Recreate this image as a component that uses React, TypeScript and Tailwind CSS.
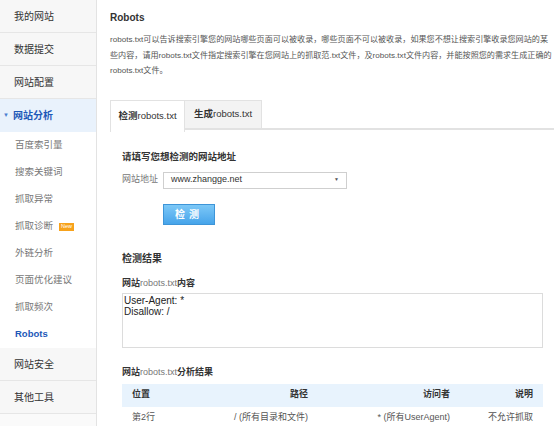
import React from "react";

const font = { fontFamily: '"Liberation Sans", "Noto Sans CJK SC", sans-serif' };

const topBefore = ["我的网站", "数据提交", "网站配置"];
const subItems = [
  "百度索引量",
  "搜索关键词",
  "抓取异常",
  "抓取诊断",
  "外链分析",
  "页面优化建议",
  "抓取频次",
];
const topAfter = ["网站安全", "其他工具"];

function Sidebar() {
  return (
    <aside className="w-[97px] shrink-0 border-r border-[#e3e3e3] bg-[#f7f7f7]">
      {topBefore.map((t) => (
        <div
          key={t}
          className="flex h-[33px] items-center border-b border-[#e6e6e6] pl-[14px] text-[10px] text-[#333]"
        >
          {t}
        </div>
      ))}
      <div className="flex h-[33px] items-center bg-[#e9f2fc] pl-[3px] text-[10px] font-bold text-[#1d58b8]">
        <span className="mr-[4px] text-[6px] text-[#4a7fd0]">▼</span>
        网站分析
      </div>
      <div className="bg-white">
        {subItems.map((t) => (
          <div
            key={t}
            className="flex h-[27px] items-center gap-[6px] pl-[15px] text-[9.5px] text-[#777]"
          >
            {t}
            {t === "抓取诊断" && (
              <span className="flex h-[8px] items-center bg-[#f7a21b] px-[2px] text-[5.5px] leading-none text-white">
                New
              </span>
            )}
          </div>
        ))}
        <div className="flex h-[27px] items-center pl-[15px] text-[9.5px] font-bold text-[#1d58b8]">
          Robots
        </div>
      </div>
      {topAfter.map((t) => (
        <div
          key={t}
          className="flex h-[33px] items-center border-b border-[#e6e6e6] pl-[14px] text-[10px] text-[#333]"
        >
          {t}
        </div>
      ))}
      <div className="h-[33px] bg-[#fafafa]" />
    </aside>
  );
}

function Tabs() {
  return (
    <div className="mt-[21px] flex h-[30px] border-b-2 border-[#e2e2e2]">
      <div className="-mb-[2px] flex h-[32px] w-[75px] items-center justify-center border border-b-0 border-[#e2e2e2] bg-white text-[9.5px] text-[#333]">
        <b>检测</b>robots.txt
      </div>
      <div className="flex w-[77px] items-center justify-center border-t border-r border-[#e2e2e2] bg-[#f3f3f3] text-[9.5px] text-[#333]">
        <b>生成</b>robots.txt
      </div>
    </div>
  );
}

const rows = [
  { pos: "第2行", path: "/ (所有目录和文件)", agent: "* (所有UserAgent)", note: "不允许抓取" },
];

export default function App() {
  return (
    <div className="flex h-[426px] overflow-hidden bg-white" style={font}>
      <Sidebar />
      <main className="min-w-0 flex-1 pl-[13px] pt-[12px]">
        <h1 className="text-[10px] leading-[12px] font-bold text-[#333]">Robots</h1>
        <p className="mt-[8px] text-[8.1px] leading-[15.5px] text-[#555]">
          robots.txt可以告诉搜索引擎您的网站哪些页面可以被收录，哪些页面不可以被收录，如果您不想让搜索引擎收录您网站的某些内容，请用robots.txt文件指定搜索引擎在您网站上的抓取范.txt文件，及robots.txt文件内容，并能按照您的需求生成正确的robots.txt文件。
        </p>

        <Tabs />

        <section className="pl-[12px] pr-[11px]">
          <h2 className="mt-[21px] text-[9.5px] leading-[12px] font-bold text-[#333]">
            请填写您想检测的网站地址
          </h2>
          <div className="mt-[9px] flex items-center">
            <span className="w-[41px] text-[9px] text-[#777]">网站地址</span>
            <div className="flex h-[17px] w-[184px] items-center justify-between border border-[#cfcfcf] bg-white pl-[7px] pr-[7px] text-[9px] text-[#333]">
              www.zhangge.net
              <span className="text-[5px] text-[#555]">▼</span>
            </div>
          </div>
          <button className="mt-[15px] ml-[41px] flex h-[21px] w-[52px] items-center justify-center border border-[#3e95d8] bg-gradient-to-b from-[#7cc8f7] to-[#46a4ea] text-[10px] font-bold tracking-[4px] text-white">
            检测
          </button>

          <h2 className="mt-[28px] text-[10px] leading-[12px] font-bold text-[#333]">检测结果</h2>
          <h3 className="mt-[12px] text-[9px] leading-[12px] text-[#333]">
            <b>网站</b>
            <span className="text-[#777]">robots.txt</span>
            <b>内容</b>
          </h3>
          <textarea
            readOnly
            value={"User-Agent: *\nDisallow: /"}
            className="mt-[4px] block h-[55px] w-[421px] resize-none border border-[#dcdcdc] px-[1px] pt-[1px] text-[10px] leading-[11px] text-[#222] outline-none"
            style={font}
          />

          <h3 className="mt-[18px] text-[9px] leading-[12px] text-[#333]">
            <b>网站</b>
            <span className="text-[#777]">robots.txt</span>
            <b>分析结果</b>
          </h3>
          <table className="mt-[6px] w-[421px] table-fixed border-collapse text-[9px]">
            <colgroup>
              <col className="w-[90px]" />
              <col className="w-[106px]" />
              <col className="w-[142px]" />
              <col className="w-[83px]" />
            </colgroup>
            <thead>
              <tr className="h-[23px] bg-[#e8f3fd] font-bold text-[#333]">
                <th className="px-[10px] text-left">位置</th>
                <th className="px-[10px] text-right">路径</th>
                <th className="px-[10px] text-right">访问者</th>
                <th className="px-[10px] text-right">说明</th>
              </tr>
            </thead>
            <tbody>
              {rows.map((r) => (
                <tr key={r.pos} className="h-[23px] text-[#555]">
                  <td className="px-[10px] text-left">{r.pos}</td>
                  <td className="px-[10px] text-right whitespace-nowrap">{r.path}</td>
                  <td className="px-[10px] text-right whitespace-nowrap">{r.agent}</td>
                  <td className="px-[10px] text-right whitespace-nowrap">{r.note}</td>
                </tr>
              ))}
            </tbody>
          </table>
        </section>
      </main>
    </div>
  );
}
